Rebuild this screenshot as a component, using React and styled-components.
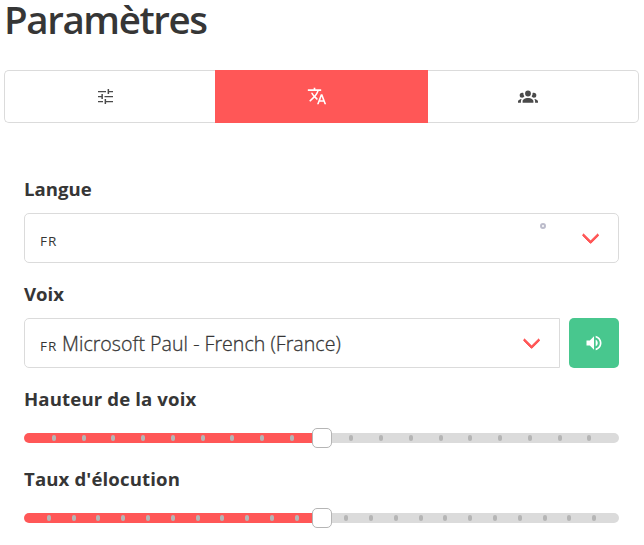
import React from "react";
import styled, { createGlobalStyle } from "styled-components";
import { MdTranslate } from "react-icons/md";

const GlobalStyle = createGlobalStyle`
  *, *::before, *::after { box-sizing: border-box; }
  body {
    margin: 0;
    background: #fff;
    color: #363636;
    font: 400 20px/30px "Open Sans", "Noto Sans", sans-serif;
  }
`;

const Page = styled.main`
  width: 635px;
  height: 545px;
  margin-left: 4px;
`;

const Title = styled.h1`
  margin: 0;
  height: 70px;
  font-size: 38.5px;
  font-weight: 600;
  line-height: 39px;
  letter-spacing: -1.4px;
`;

const Tabs = styled.nav`
  display: grid;
  grid-template-columns: 211px 213px 211px;
  height: 53px;
`;

const Tab = styled.button`
  display: flex;
  align-items: center;
  justify-content: center;
  padding: 0 0 1px 1px;
  border: 1px solid ${(p) => (p.$active ? "#ff5757" : "#dbdbdb")};
  background: ${(p) => (p.$active ? "#ff5757" : "#fff")};
  color: ${(p) => (p.$active ? "#fff" : "#4a4a4a")};

  &:first-child { border-right: 0; border-radius: 5px 0 0 5px; padding: 0 10px 0 1px; }
  &:last-child { border-left: 0; border-radius: 0 5px 5px 0; padding-right: 11px; }
  &:nth-child(2) { padding-right: 10px; }
`;

const Panel = styled.section`
  padding: 51px 20px 0;
`;

const Field = styled.div`
  height: ${(p) => p.$height}px;
`;

const Label = styled.label`
  display: block;
  height: 39px;
  font-size: 18.6px;
  font-weight: 700;
  letter-spacing: ${(p) => p.$tracking || 0}px;
`;

const Row = styled.div`
  display: flex;
  gap: 9px;
`;

const Select = styled.div`
  position: relative;
  flex: 1;
  display: flex;
  align-items: baseline;
  height: 50px;
  padding: ${(p) => (p.$joined ? "10px" : "12px")} 15px 0;
  border: 1px solid #dbdbdb;
  border-radius: ${(p) => (p.$joined ? "5px 0 0 5px" : "5px")};

  &::after {
    content: "";
    position: absolute;
    top: 15px;
    right: 21.5px;
    width: 12.5px;
    height: 12.5px;
    border: 3px solid #ff5757;
    border-top: 0;
    border-right: 0;
    border-radius: 2px;
    transform: rotate(-45deg);
  }
`;

const Flag = styled.span`
  width: 22px;
  font-size: 13.5px;
  letter-spacing: 1px;
`;

const Value = styled.span`
  font-size: 19.6px;
  font-weight: 300;
  letter-spacing: 0.02px;
  -webkit-text-stroke: 0.3px #363636;
  white-space: nowrap;
`;

const Loader = styled.i`
  position: absolute;
  top: 9px;
  right: 72px;
  width: 6px;
  height: 6px;
  border: 2px solid #bcbccb;
  border-radius: 50%;
`;

const PlayButton = styled.button`
  display: flex;
  align-items: center;
  justify-content: center;
  width: 50px;
  height: 50px;
  padding: 0;
  border: 0;
  border-radius: 5px;
  background: #48c78e;
  color: #fff;
`;

const Track = styled.div`
  position: relative;
  margin-top: 10px;
  height: 10px;
  border-radius: 5px;
  background: linear-gradient(90deg, #ff5757 50%, #dbdbdb 50%);
`;

const Tick = styled.i`
  position: absolute;
  top: 2px;
  width: 4px;
  height: 6px;
  border-radius: 4px;
  background: #b5b5b5;
  transform: translateX(-50%);
`;

const Thumb = styled.span`
  position: absolute;
  top: -5px;
  left: 288px;
  width: 20px;
  height: 20px;
  border: 1px solid #b5b5b5;
  border-radius: 5px;
  background: #fff;
`;

const Glyph = ({ d }) => (
  <svg width="20" height="20" viewBox="0 0 24 24" fill="currentColor"><path d={d} /></svg>
);

const TuneIcon = () => (
  <svg width="15" height="15" viewBox="0 0 15 15" fill="currentColor">
    <path d="M0 2h8v1.2H0zM9.6 0h1.5v2H15v1.2h-3.9V5H9.6zM0 7h3.4V5h1.5v5H3.4V8.2H0zM6.5 7H15v1.2H6.5zM0 12h5v1.2H0zM6.6 10h1.5v2H15v1.2H8.1V15H6.6z" />
  </svg>
);

const groupPath = "M12,5.5A3.5,3.5 0 0,1 15.5,9A3.5,3.5 0 0,1 12,12.5A3.5,3.5 0 0,1 8.5,9A3.5,3.5 0 0,1 12,5.5M5,8C5.56,8 6.08,8.15 6.53,8.42C6.38,9.85 6.8,11.27 7.66,12.38C7.16,13.34 6.16,14 5,14A3,3 0 0,1 2,11A3,3 0 0,1 5,8M19,8A3,3 0 0,1 22,11A3,3 0 0,1 19,14C17.84,14 16.84,13.34 16.34,12.38C17.2,11.27 17.62,9.85 17.47,8.42C17.92,8.15 18.44,8 19,8M5.5,18.25C5.5,16.18 8.41,14.5 12,14.5C15.59,14.5 18.5,16.18 18.5,18.25V20H5.5V18.25M0,20V18.5C0,17.11 1.89,15.94 4.45,15.6C3.86,16.28 3.5,17.22 3.5,18.25V20H0M24,20H20.5V18.25C20.5,17.22 20.14,16.28 19.55,15.6C22.11,15.94 24,17.11 24,18.5V20Z";
const volumePath = "M14,3.23V5.29C16.89,6.15 19,8.83 19,12C19,15.17 16.89,17.84 14,18.7V20.77C18,19.86 21,16.28 21,12C21,7.72 18,4.14 14,3.23M16.5,12C16.5,10.23 15.5,8.71 14,7.97V16C15.5,15.29 16.5,13.76 16.5,12M3,9V15H7L12,20V4L7,9H3Z";

function Slider({ steps }) {
  return (
    <Track>
      {Array.from({ length: steps - 1 }, (_, i) => (
        <Tick key={i} style={{ left: `${((i + 1) / steps) * 100}%` }} />
      ))}
      <Thumb />
    </Track>
  );
}

export default function App() {
  return (
    <Page>
      <GlobalStyle />
      <Title>Paramètres</Title>
      <Tabs>
        <Tab><TuneIcon /></Tab>
        <Tab $active><MdTranslate size={20} /></Tab>
        <Tab><Glyph d={groupPath} /></Tab>
      </Tabs>
      <Panel>
        <Field $height={105}>
          <Label>Langue</Label>
          <Select><Flag>FR</Flag><Loader /></Select>
        </Field>
        <Field $height={105}>
          <Label>Voix</Label>
          <Row>
            <Select $joined>
              <Flag>FR</Flag>
              <Value>Microsoft Paul - French (France)</Value>
            </Select>
            <PlayButton><Glyph d={volumePath} /></PlayButton>
          </Row>
        </Field>
        <Field $height={80}>
          <Label $tracking={0.13}>Hauteur de la voix</Label>
          <Slider steps={20} />
        </Field>
        <Field $height={80}>
          <Label $tracking={0.13}>Taux d'élocution</Label>
          <Slider steps={24} />
        </Field>
      </Panel>
    </Page>
  );
}
